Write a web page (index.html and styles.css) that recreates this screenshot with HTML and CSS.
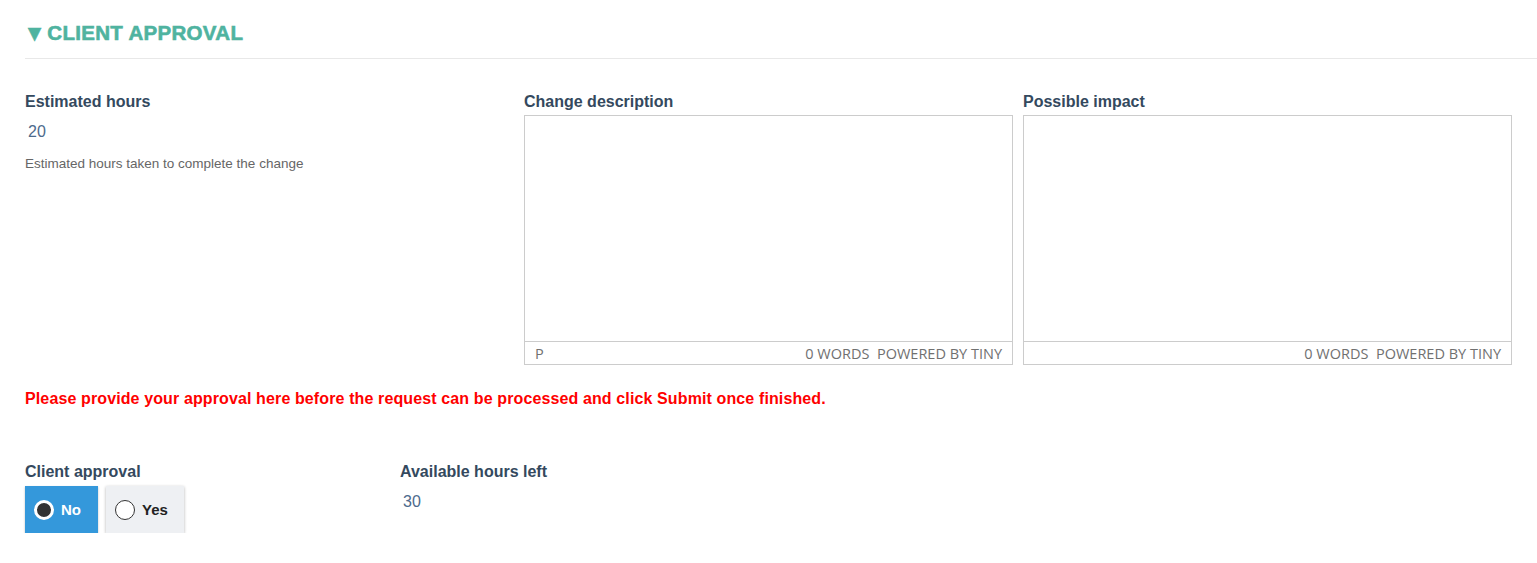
FILE: index.html
```html
<!DOCTYPE html>
<html lang="en">
<head>
    <meta charset="UTF-8">
    <meta name="viewport" content="width=device-width, initial-scale=1.0">
    <title>Client Approval</title>
    <link rel="stylesheet" href="styles.css">
</head>
<body>
    <div class="section">
        <div class="section-head">
            <h2><span class="caret">&#9660;</span> CLIENT APPROVAL</h2>
        </div>

        <div class="fields">
            <div class="field">
                <div class="label">Estimated hours</div>
                <div class="value">20</div>
                <div class="help">Estimated hours taken to complete the change</div>
            </div>
            <div class="field">
                <div class="label">Change description</div>
                <div class="editor">
                    <div class="editor-body"></div>
                    <div class="statusbar">
                        <span>P</span>
                        <span>0 WORDS &nbsp;POWERED BY TINY</span>
                    </div>
                </div>
            </div>
            <div class="field">
                <div class="label">Possible impact</div>
                <div class="editor">
                    <div class="editor-body"></div>
                    <div class="statusbar">
                        <span></span>
                        <span>0 WORDS &nbsp;POWERED BY TINY</span>
                    </div>
                </div>
            </div>
        </div>

        <p class="notice">Please provide your approval here before the request can be processed and click Submit once finished.</p>

        <div class="approval-row">
            <div class="field">
                <div class="label">Client approval</div>
                <div class="toggle">
                    <label class="option active"><span class="radio"></span>No</label>
                    <label class="option"><span class="radio"></span>Yes</label>
                </div>
            </div>
            <div class="field">
                <div class="label">Available hours left</div>
                <div class="value">30</div>
            </div>
        </div>
    </div>
</body>
</html>
```

FILE: styles.css
```css
body {
    margin: 0;
    font-family: "Liberation Sans", Arial, sans-serif;
    color: #34495e;
    background: #fff;
}
.section {
    padding: 0 0 0 25px;
}
.section-head {
    padding: 22px 0 13px 0;
    border-bottom: 1px solid #e8e8e8;
}
.section-head h2 {
    margin: 0;
    font-size: 20.5px;
    line-height: 22px;
    font-weight: bold;
    letter-spacing: 0.3px;
    color: #4fb3a0;
    -webkit-text-stroke: 0.6px #4fb3a0;
    padding-left: 3px;
}
.caret {
    font-family: "DejaVu Sans", sans-serif;
    font-size: 17px;
    position: relative;
    top: -1px;
}
.fields {
    display: grid;
    grid-template-columns: 489px 489px 489px;
    column-gap: 10px;
    margin-top: 34px;
}
.label {
    font-size: 16px;
    line-height: 18px;
    font-weight: bold;
    color: #34495e;
}
.value {
    margin-top: 12px;
    padding-left: 3px;
    font-size: 16px;
    line-height: 18px;
    color: #4d6a8c;
}
.help {
    margin-top: 15px;
    font-size: 13.5px;
    line-height: 16px;
    color: #666;
}
.editor {
    margin-top: 4px;
    border: 1px solid #ccc;
    height: 248px;
    display: flex;
    flex-direction: column;
}
.editor-body {
    flex: 1;
}
.statusbar {
    height: 22px;
    border-top: 1px solid #ccc;
    display: flex;
    justify-content: space-between;
    align-items: center;
    padding: 0 10px;
    font-family: "Open Sans", sans-serif;
    font-size: 14.5px;
    color: #707070;
}
.notice {
    margin: 25px 0 0 0;
    font-size: 16px;
    line-height: 18px;
    font-weight: bold;
    letter-spacing: 0.12px;
    color: #ff0000;
}
.approval-row {
    display: grid;
    grid-template-columns: 375px 300px;
    margin-top: 55px;
}
.toggle {
    display: flex;
    gap: 8px;
    margin-top: 5px;
}
.option {
    box-sizing: border-box;
    width: 78px;
    display: flex;
    align-items: center;
    gap: 7px;
    height: 47px;
    padding: 0 0 0 9px;
    font-size: 15px;
    font-weight: bold;
    color: #222;
    background: #eef0f3;
    box-shadow: 0 1px 3px rgba(0, 0, 0, 0.3);
}
.option.active {
    width: 73px;
    background: #3498db;
    color: #fff;
    box-shadow: 0 1px 2px rgba(0, 0, 0, 0.25);
}
.radio {
    width: 18px;
    height: 18px;
    border-radius: 50%;
    border: 1px solid #333;
    background: #fff;
    box-sizing: content-box;
}
.option.active .radio {
    width: 14px;
    height: 14px;
    border: 3px solid #fff;
    background: #333;
}
```
